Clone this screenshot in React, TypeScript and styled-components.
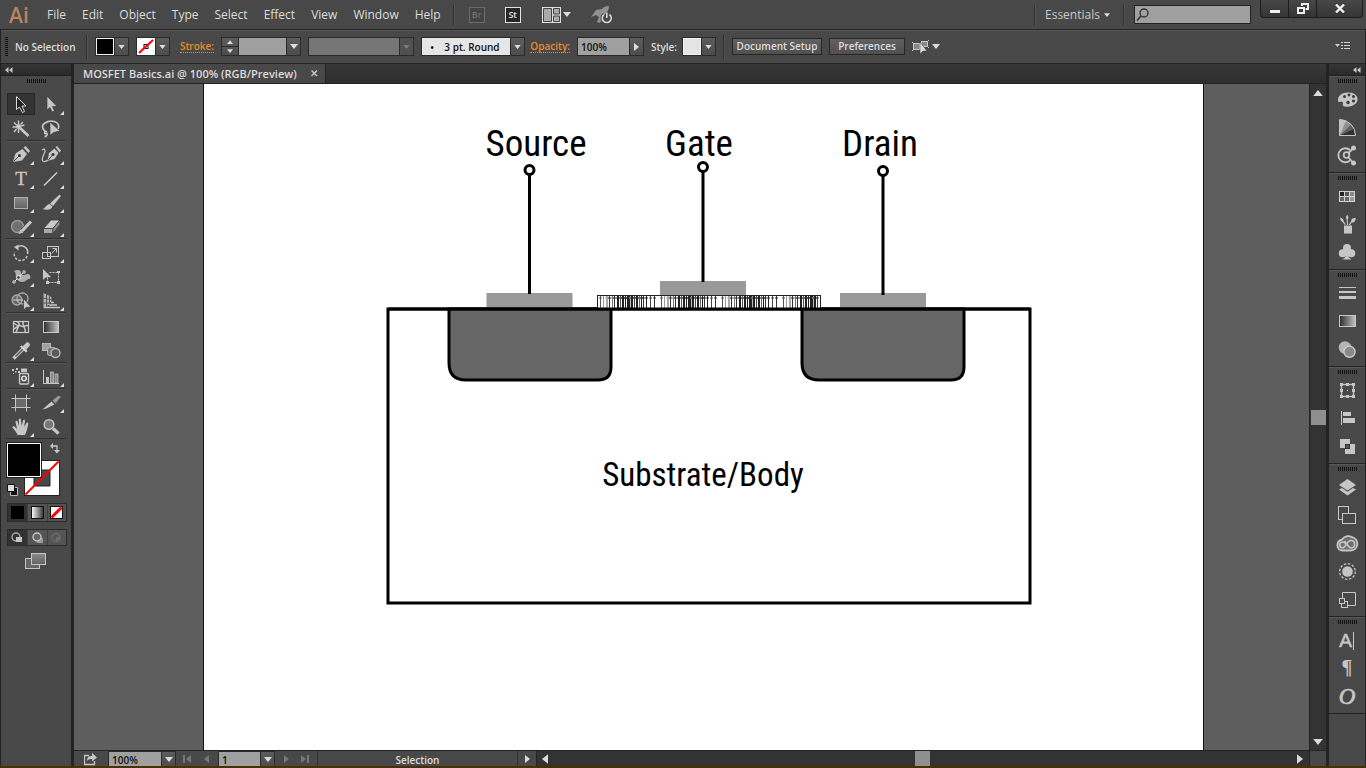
import React from "react";
import styled, { createGlobalStyle, css } from "styled-components";

const c = {
  panel: "#484848",
  line: "#232323",
  light: "#585858",
  icon: "#c6c6c6",
  text: "#dcdcdc",
  orange: "#e68a2e",
  field: "#a0a0a0",
  track: "#333333",
};

const GlobalStyle = createGlobalStyle`
  * { box-sizing: border-box; }
  body { margin: 0; background: ${c.panel}; overflow: hidden; }
  button, input, select { font: inherit; color: inherit; margin: 0; padding: 0; border: 0; border-radius: 0; background: none; }
  svg { display: block; flex: none; }
`;

const Window = styled.div`
  display: flex;
  flex-direction: column;
  height: 100vh;
  font-family: "Open Sans", "Noto Sans", sans-serif;
  font-size: 11px;
  color: ${c.text};
  background: ${c.panel};
  border-bottom: 2px solid #4a2e08;
`;

/* ---------- menu bar ---------- */

const MenuBar = styled.header`
  display: flex;
  flex: none;
  height: 29px;
  padding: 0 3px 0 9px;
  align-items: center;
`;

const Logo = styled.div`
  width: 30px;
  color: #b98261;
  font: 600 21px/26px "Open Sans", sans-serif;
`;

const Menus = styled.nav`
  display: flex;
  margin-right: 4px;
  font: 12px/27px "Open Sans", sans-serif;
`;

const MenuItem = styled.button`
  padding: 0 8px;
  height: 27px;
  white-space: nowrap;
`;

const VRule = styled.span<{ $h?: number }>`
  flex: none;
  width: 2px;
  height: ${(p) => p.$h ?? 20}px;
  border-left: 1px solid #303030;
  border-right: 1px solid #555;
`;

const AppIcons = styled.div`
  display: flex;
  align-items: center;
  gap: 20px;
  margin-left: 14px;
`;

const AppBadge = styled.button<{ $dim?: boolean }>`
  width: 16px;
  height: 16px;
  border: 1px solid ${(p) => (p.$dim ? "#6c6c6c" : "#e2e2e2")};
  background: ${(p) => (p.$dim ? "#434343" : "#262626")};
  color: ${(p) => (p.$dim ? "#707070" : "#e2e2e2")};
  font: 600 9px/13px "Open Sans", sans-serif;
`;

const IconButton = styled.button`
  display: flex;
  align-items: center;
  gap: 2px;
`;

const MenuRight = styled.div`
  display: flex;
  align-items: center;
  align-self: stretch;
  gap: 9px;
  margin-left: auto;
`;

const Workspace = styled.button`
  display: flex;
  align-items: center;
  justify-content: space-between;
  width: 69px;
  height: 24px;
  padding-right: 4px;
  color: #c8c8c8;
  font: 12px/22px "Open Sans", sans-serif;
`;

const Search = styled.label`
  display: flex;
  align-items: center;
  width: 117px;
  height: 19px;
  background: ${c.field};
  border: 1px solid ${c.line};

  input { flex: 1; min-width: 0; color: #111; outline: 0; }
`;

const WindowButtons = styled.div`
  display: flex;
  align-self: flex-start;
  height: 18px;
  border: 1px solid #1c1c1c;
  border-top: 0;
  border-radius: 0 0 4px 4px;
  background: linear-gradient(#474747, #353535);
`;

const WindowButton = styled.button<{ $w: number }>`
  display: grid;
  place-items: center;
  width: ${(p) => p.$w}px;
  & + & { border-left: 1px solid #1c1c1c; }
`;

/* ---------- control bar ---------- */

const ControlBar = styled.div`
  display: flex;
  flex: none;
  align-items: center;
  gap: 7px;
  height: 35px;
  padding: 0 15px 0 4px;
  border: 1px solid ${c.line};
  box-shadow: inset 0 1px ${c.light};
  font-size: 10px;
  font-weight: 600;
`;

const Grip = styled.span<{ $vertical?: boolean }>`
  flex: none;
  ${(p) =>
    p.$vertical
      ? css`
          width: 3px;
          height: 19px;
          background: repeating-linear-gradient(#111 0 1px, transparent 1px 2px);
        `
      : css`
          width: 19px;
          height: 4px;
          background: repeating-linear-gradient(90deg, #111 0 1px, transparent 1px 2px);
        `}
`;

const Status = styled.span`
  width: 64px;
  white-space: nowrap;
`;

const LinkLabel = styled.a<{ $w: number }>`
  display: flex;
  justify-content: flex-end;
  width: ${(p) => p.$w}px;
  color: ${c.orange};
  text-decoration: none;
  line-height: 12px;
  white-space: nowrap;

  span { border-bottom: 1px dotted ${c.orange}; }
`;

const Combo = styled.span<{ $w: number; $tone?: string; $dim?: boolean }>`
  display: flex;
  flex: none;
  width: ${(p) => p.$w}px;
  height: 19px;
  border: 1px solid #2a2a2a;
  background: ${(p) => (p.$dim ? "#505050" : "linear-gradient(#5c5c5c, #4c4c4c)")};

  select, input {
    flex: 1;
    min-width: 0;
    appearance: none;
    outline: 0;
    opacity: 1;
    padding: 0 3px;
    background: ${(p) => p.$tone ?? c.field};
    color: #111;
  }
`;

const ArrowCell = styled.span`
  display: grid;
  flex: none;
  place-items: center;
  width: 14px;
  border-left: 1px solid #2a2a2a;
`;

const Stepper = styled.span`
  display: grid;
  width: 17px;
  border-right: 1px solid #2a2a2a;

  button { display: grid; place-items: center; }
  button + button { border-top: 1px solid #2a2a2a; }
`;

const SwatchButton = styled.button`
  display: flex;
  flex: none;
  width: 34px;
  height: 19px;
  border: 1px solid #2a2a2a;
  background: linear-gradient(#5c5c5c, #4c4c4c);
  align-items: stretch;
`;

const Chip = styled.span<{ $fill: string }>`
  flex: 1;
  border: 1px solid #f2f2f2;
  background: ${(p) => p.$fill};
`;

const StyleLabel = styled.span`
  width: 24px;
  white-space: nowrap;
`;

const PushButton = styled.button<{ $w: number }>`
  flex: none;
  width: ${(p) => p.$w}px;
  height: 17px;
  border: 1px solid #262626;
  background: linear-gradient(#616161, #4f4f4f);
  line-height: 15px;
  white-space: nowrap;
`;

const PanelMenu = styled.button`
  margin-left: auto;
`;

/* ---------- work area ---------- */

const Work = styled.main`
  display: flex;
  flex: 1;
  min-height: 0;
`;

const PanelHeader = styled.div<{ $right?: boolean }>`
  display: flex;
  flex: none;
  align-items: center;
  justify-content: ${(p) => (p.$right ? "flex-end" : "flex-start")};
  height: 12px;
  padding: 0 4px;
  background: linear-gradient(#353535, #2a2a2a);
  border-bottom: 1px solid #1f1f1f;
`;

const Tools = styled.aside`
  display: flex;
  flex: none;
  flex-direction: column;
  width: 74px;
  border: solid ${c.line};
  border-width: 0 3px 0 1px;
`;

const GripRow = styled.div<{ $h: number }>`
  display: flex;
  flex: none;
  justify-content: center;
  align-items: flex-start;
  height: ${(p) => p.$h}px;
  padding-top: 3px;
`;

const ToolGroup = styled.div`
  display: grid;
  grid-template-columns: 30px 30px;
  grid-auto-rows: 24px;
  margin-left: 5px;
  width: 60px;

  & + & {
    border-top: 1px solid #303030;
    box-shadow: inset 0 1px #555;
    padding-top: 1px;
  }
`;

const ToolButton = styled.button<{ $on?: boolean }>`
  display: grid;
  place-items: center;
  margin: 1px;
  ${(p) => p.$on && "background: #333; box-shadow: inset 0 0 0 1px #262626;"}
`;

const Paint = styled.div`
  height: 65px;
  margin-left: 5px;
  width: 60px;
  border-top: 1px solid #303030;
`;

const ModeRow = styled.div<{ $h: number }>`
  display: grid;
  grid-template-columns: repeat(3, 1fr);
  width: 60px;
  height: ${(p) => p.$h}px;
  margin: 0 0 7px 6px;
  border: 1px solid #2a2a2a;
  background: #545454;
`;

const ModeButton = styled.button<{ $on?: boolean }>`
  display: grid;
  place-items: center;
  background: ${(p) => (p.$on ? "#323232" : "none")};
  & + & { border-left: 1px solid #404040; }
`;

const ScreenMode = styled.button`
  align-self: center;
`;

const Center = styled.section`
  display: flex;
  flex: 1;
  min-width: 0;
  flex-direction: column;
  border-right: 2px solid ${c.line};
`;

const Tabs = styled.div`
  display: flex;
  flex: none;
  height: 20px;
  background: linear-gradient(#383838, #2d2d2d);
  border-bottom: 1px solid ${c.line};
`;

const Tab = styled.div`
  display: flex;
  align-items: center;
  gap: 14px;
  width: 252px;
  padding-left: 9px;
  background: ${c.panel};
  border-right: 1px solid ${c.line};
  font-weight: 600;
  font-size: 11px;
  white-space: nowrap;
`;

const CanvasRow = styled.div`
  display: flex;
  flex: 1;
  min-height: 0;
`;

const Pasteboard = styled.div`
  flex: 1;
  min-width: 0;
  overflow: hidden;
  padding-left: 129px;
  background: #5e5e5e;
`;

const Artboard = styled.div`
  width: 1001px;
  height: 100%;
  background: #fff;
  border: solid #111;
  border-width: 0 1px;
`;

const VScroll = styled.div`
  display: flex;
  flex: none;
  flex-direction: column;
  align-items: center;
  justify-content: space-between;
  width: 17px;
  padding: 6px 0 5px;
  background: ${c.track};
  border-left: 1px solid ${c.line};
`;

const Thumb = styled.span`
  width: 15px;
  height: 15px;
  background: #8f8f8f;
`;

const Footer = styled.footer`
  display: flex;
  flex: none;
  align-items: stretch;
  height: 16px;
  border-top: 1px solid ${c.line};
  font-size: 10px;
  font-weight: 600;
`;

const FooterControls = styled.div`
  display: flex;
  align-items: center;
  width: 243px;
  padding-left: 10px;
`;

const FooterNav = styled.span`
  display: flex;
  justify-content: space-evenly;
  width: 43px;
  button { display: grid; place-items: center; width: 14px; height: 15px; }
`;

const FooterCombo = styled(Combo)`
  height: 15px;
  border-bottom: 0;

  select, input { padding-top: 2px; line-height: 12px; }
`;

const Readout = styled.div`
  display: flex;
  justify-content: center;
  width: 201px;
  border: solid #303030;
  border-width: 0 1px;
  line-height: 18px;
`;

const FooterArrow = styled.button`
  display: grid;
  place-items: center;
  width: 18px;
`;

const HScroll = styled.div`
  display: flex;
  flex: 1;
  align-items: center;
  justify-content: space-between;
  padding: 0 6px 0 5px;
  background: ${c.track};
  border: solid ${c.line};
  border-width: 0 1px;
`;

const Corner = styled.span`
  width: 16px;
`;

const Dock = styled.aside`
  display: flex;
  flex: none;
  flex-direction: column;
  width: 38px;
  border: solid ${c.line};
  border-width: 0 1px;
`;

const DockGroup = styled.div`
  display: flex;
  flex-direction: column;
  align-items: center;
  padding-bottom: 2px;
  border-bottom: 1px solid ${c.line};
  box-shadow: inset 0 1px ${c.light};
`;

const DockButton = styled.button`
  display: block;
  width: 28px;
  height: 28px;
`;

/* ---------- small glyphs ---------- */

const arrowPath = { down: "0,0 8,0 4,5", up: "0,5 8,5 4,0", right: "0,0 5,4 0,8", left: "5,0 5,8 0,4" };

function Arrow({ dir = "down", fill = "#dcdcdc", size = 8 }: { dir?: keyof typeof arrowPath; fill?: string; size?: number }) {
  const side = dir === "left" || dir === "right";
  const short = Math.round(size * 0.625);
  return (
    <svg width={side ? short : size} height={side ? size : short} viewBox={side ? "0 0 5 8" : "0 0 8 5"}>
      <polygon points={arrowPath[dir]} fill={fill} />
    </svg>
  );
}

const DoubleArrow = () => (
  <svg width="8" height="6" viewBox="0 0 8 6" fill="#c8c8c8">
    <path d="M3.5 0V6L0 3ZM7.5 0V6L4 3Z" />
  </svg>
);

const I = c.icon;

/* ---------- tool icons, drawn in a 28 x 24 box ---------- */

type Tool = { name: string; art: React.ReactNode; fly?: boolean; on?: boolean };

const toolGroups: Tool[][] = [
  [
    { name: "Selection", on: true, art: <path d="M9.5 3.5V16.5L12.5 14L15.5 19.5L17.5 18.5L15 13H19Z" fill="#222" stroke="#d8d8d8" /> },
    { name: "Direct Selection", fly: true, art: <path d="M10 3V17L13 14.5L15 19L17.5 18L15.5 13.5H20Z" fill={I} stroke="#333" strokeWidth=".6" /> },
    {
      name: "Magic Wand",
      art: (
        <g stroke={I} fill="none">
          <path d="M13 11L21.5 19" strokeWidth="2.8" />
          <path d="M11.5 3.5V7M11.5 12V16M5.5 10H9M14 9L17.5 8M7 5.5L9.5 8M16 5L13.5 7.5M7 15L9.5 12" strokeWidth="1.4" />
          <circle cx="11.5" cy="9.5" r="2.5" fill={I} stroke="none" />
        </g>
      ),
    },
    {
      name: "Lasso",
      art: (
        <g>
          <path d="M10 15C5 13 4 8 8 6C12 3 20 3.5 21.5 8C22 10 21 12 20 12.5M10 15C6.5 13.5 7 18 10 16.5C11 18 9 19.5 7.5 19.5" fill="none" stroke={I} strokeWidth="1.6" />
          <path d="M13 5V18.5L16.5 15.5L23 14Z" fill={I} stroke="#333" strokeWidth=".6" />
        </g>
      ),
    },
  ],
  [
    {
      name: "Pen",
      fly: true,
      art: (
        <g fill={I}>
          <path d="M16.5 4.5L18.5 3L23 8L21.5 10Z" />
          <path d="M6 19L8.5 10.5L15.5 6L20 11L15 17.5Z" />
          <path d="M6.5 18.5L12 13" stroke="#444" />
          <circle cx="12.5" cy="12.5" r="1.5" fill="#333" />
        </g>
      ),
    },
    {
      name: "Curvature",
      fly: true,
      art: (
        <g fill={I}>
          <path d="M18.5 4L20 3L24 7.5L22.5 9.5Z" />
          <path d="M10.5 18L12 10L17.5 5.5L21.5 10L17.5 16Z" />
          <circle cx="16" cy="11.5" r="1.5" fill="#333" />
          <path d="M10.5 18L15.5 12" stroke="#444" />
          <path d="M5 7C8 5 9 7 7 11C5 15 4 19 8 18.5C10 18 10 18 11 17" fill="none" stroke={I} strokeWidth="1.2" />
        </g>
      ),
    },
    { name: "Type", fly: true, art: <text x="14" y="18" textAnchor="middle" fontFamily="Liberation Serif, serif" fontSize="19" fill={I} stroke={I} strokeWidth=".4">T</text> },
    { name: "Line Segment", fly: true, art: <path d="M7 18.5L20 5.5" stroke="#d0d0d0" strokeWidth="1.5" /> },
    { name: "Rectangle", fly: true, art: <rect x="7.5" y="6.5" width="13" height="11" fill="url(#shade)" stroke="#b0b0b0" /> },
    {
      name: "Paintbrush",
      fly: true,
      art: (
        <g fill={I}>
          <path d="M22.5 3.5L24 5L16 15L13 12.5Z" />
          <path d="M12.5 13L15.5 15.5C14 19 10 19.5 5.5 18C8.5 17.5 9 13.5 12.5 13Z" />
        </g>
      ),
    },
    {
      name: "Shaper",
      fly: true,
      art: (
        <g>
          <circle cx="10.5" cy="11.5" r="6" fill="#707070" stroke="#999" strokeWidth="1.4" />
          <path d="M23.5 7L15 16" stroke="#444" strokeWidth="4.5" />
          <path d="M24 6.5L15 16" stroke={I} strokeWidth="3.2" />
          <path d="M13.5 14.5L16.5 17.5L11.5 19Z" fill={I} />
        </g>
      ),
    },
    {
      name: "Eraser",
      fly: true,
      art: (
        <g stroke="#3a3a3a" strokeWidth=".8">
          <path d="M14 5H23L16 13.5H6.5Z" fill="#c8c8c8" />
          <path d="M6.5 13.5H16V18.5H6.5Z" fill="#a8a8a8" />
          <path d="M23 5V9.5L16 18.5V13.5Z" fill="#8c8c8c" />
        </g>
      ),
    },
  ],
  [
    {
      name: "Rotate",
      fly: true,
      art: (
        <g fill="none" stroke={I} strokeWidth="1.5">
          <path d="M10 6.5A6.5 6.5 0 0 1 20.5 13" />
          <path d="M20 15A6.5 6.5 0 0 1 7.5 11" strokeDasharray="2.5 1.5" />
          <path d="M11.5 3.5V9.5L7 6Z" fill={I} stroke="none" />
        </g>
      ),
    },
    {
      name: "Scale",
      fly: true,
      art: (
        <g fill="none" stroke={I}>
          <rect x="10.5" y="5.5" width="11" height="10" />
          <rect x="5.5" y="11.5" width="8" height="6" />
          <path d="M14.5 12.5L19 8M15.5 7.5H19.5V11.5" />
        </g>
      ),
    },
    {
      name: "Width",
      fly: true,
      art: (
        <g>
          <path d="M7 6C11 4 14 5 14 8C15 12 18 9 21 9C23 9 24 12 23 14C21 13 19 17 15 17C11 17 11 14 10 14C7 13 11 10 7 6Z" fill="#b0b0b0" />
          <path d="M7 17L11.5 12.5L17 7" stroke="#eee" fill="none" />
          <g fill="#333" stroke="#eee">
            <circle cx="7" cy="17" r="1.2" />
            <circle cx="11.5" cy="12.5" r="1.8" />
            <circle cx="17" cy="7" r="1.2" />
          </g>
        </g>
      ),
    },
    {
      name: "Free Transform",
      art: (
        <g>
          <path d="M12.5 7.5H21.5V17.5H10.5V12" fill="none" stroke={I} strokeDasharray="2 1" />
          <path d="M20 6H23V8H20ZM20 16H23V19H20ZM9 16H12V19H9Z" fill={I} />
          <path d="M6 4V15L8.5 12.5L14 12Z" fill={I} />
        </g>
      ),
    },
    {
      name: "Shape Builder",
      fly: true,
      art: (
        <g fill="none" stroke="#aaa" strokeWidth="1.3">
          <circle cx="10" cy="11" r="5" fill="#666" />
          <circle cx="15.5" cy="9.5" r="5.5" />
          <path d="M6.5 11H16" stroke="#eee" strokeDasharray="1 1" />
          <path d="M16.5 9.5V21L19 18.5L24 18Z" fill={I} stroke="#333" strokeWidth=".6" />
        </g>
      ),
    },
    {
      name: "Perspective Grid",
      fly: true,
      art: (
        <g>
          <path d="M6.5 4L14.5 8V13H12.5V16H10.5V19H6.5Z" fill="#b4b4b4" />
          <path d="M9.5 5V19M12.5 6V16M6 9L15 11M6 14H13" stroke="#5a5a5a" fill="none" />
          <path d="M14 13.5H17M12 16H20M7 18.5H23" stroke={I} strokeWidth="1.6" />
        </g>
      ),
    },
  ],
  [
    {
      name: "Mesh",
      art: (
        <g fill="none" stroke={I} strokeWidth="1.2">
          <rect x="6.5" y="6.5" width="15" height="11" />
          <path d="M6.5 14C10 13 12 9 14 11C17 13 18 9 21.5 11M10 6.5C15 9 10 13 9 17.5M17 6.5C13 9 20 13 18 17.5M6.5 8L11 11" strokeWidth="1.5" />
        </g>
      ),
    },
    { name: "Gradient", art: <rect x="6.5" y="6.5" width="15" height="11" fill="url(#fade)" stroke={I} /> },
    {
      name: "Eyedropper",
      fly: true,
      art: (
        <g>
          <path d="M16 10L8.5 17.5L6.5 19.5" stroke={I} strokeWidth="3.5" />
          <path d="M16 10L8.5 17.5" stroke="#555" strokeWidth="1.5" />
          <path d="M13 7.5L14.5 6.5L20.5 12L19 13.5Z" fill="#ddd" />
          <path d="M15.5 7.5L19.5 3.5C21 2.5 24 5 22.5 7L19 11Z" fill={I} />
        </g>
      ),
    },
    {
      name: "Blend",
      art: (
        <g stroke="#b8b8b8">
          <rect x="5.5" y="4.5" width="8" height="7" fill="#a0a0a0" />
          <rect x="10.5" y="8.5" width="8" height="8" rx="2" fill="#777" />
          <circle cx="18.5" cy="14" r="4.5" fill="#5a5a5a" strokeWidth="1.4" />
        </g>
      ),
    },
  ],
  [
    {
      name: "Symbol Sprayer",
      fly: true,
      art: (
        <g fill={I}>
          <path d="M5 4h2v2H5zM8 6h1.5v1.5H8zM9 3h2v2H9zM11 6h2v2h-2zM6 8h1v1H6z" />
          <rect x="14" y="3.5" width="6" height="3.5" />
          <rect x="12.5" y="8.5" width="9" height="10.5" rx="1" fill="none" stroke={I} strokeWidth="1.4" />
          <circle cx="17" cy="13.5" r="2.2" fill="none" stroke="#ddd" strokeWidth="1.6" />
        </g>
      ),
    },
    {
      name: "Column Graph",
      fly: true,
      art: (
        <g fill={I}>
          <path d="M6 5H7V18H22V19H6Z" />
          <rect x="9" y="12" width="3" height="6" />
          <rect x="13.5" y="7" width="3" height="11" fill="#8d8d8d" stroke={I} strokeWidth=".7" />
          <rect x="18" y="9" width="3" height="9" fill="#8d8d8d" stroke={I} strokeWidth=".7" />
        </g>
      ),
    },
  ],
  [
    {
      name: "Artboard",
      art: (
        <g fill="none" stroke={I}>
          <rect x="8.5" y="7.5" width="11" height="9" fill="#6a6a6a" />
          <path d="M4.5 7.5H23.5M4.5 16.5H23.5M8.5 3.5V20.5M19.5 3.5V20.5" />
        </g>
      ),
    },
    {
      name: "Slice",
      fly: true,
      art: (
        <g fill={I}>
          <path d="M5.5 18.5L14.5 10.5L17.5 13.5C13 15.5 10 18 5.5 18.5Z" />
          <path d="M15.5 9.5L21 5L24 5.5L18.5 12.5Z" fill="#999" />
        </g>
      ),
    },
    {
      name: "Hand",
      fly: true,
      art: (
        <path
          d="M10.5 20C10 17.5 6.5 14 5.5 12.5C5 11.5 7 10.5 8 12L10 14L8.5 7C8.3 5.5 10 5.2 10.5 6.5L12 11L11.8 4.5C12 3.2 13.7 3.2 14 4.5L14.5 11L16 5.5C16.5 4.2 18.2 4.6 18 6L17.2 12L19.5 8C20.2 7 21.7 7.7 21.3 9C20.5 12 20 16 18 20Z"
          fill={I}
        />
      ),
    },
    {
      name: "Zoom",
      art: (
        <g fill="none" stroke={I}>
          <circle cx="12" cy="9.5" r="4.8" fill="#777" strokeWidth="1.5" />
          <path d="M16 13.5L21.5 18.5" strokeWidth="3.2" />
        </g>
      ),
    },
  ],
];

/* ---------- dock icons, drawn in a 28 x 28 box ---------- */

type Panel = [string, React.ReactNode];

const glyph = (ch: string, x: number, family: string, extra: object = {}) => (
  <text x={x} y="21" textAnchor="middle" fontFamily={family} fontSize="19" fill={I} {...extra}>
    {ch}
  </text>
);

const dockGroups: Panel[][] = [
  [
    [
      "Color",
      <g key="g">
        <path d="M5 15C4.5 9 10 6 16 6.5C22 7 25 10 24.5 14C24 18.5 18 21.5 12 20.5C8 20 11 17 9.5 16C8 15 5.5 17 5 15Z" fill={I} />
        <g fill="#3c3c3c">
          <circle cx="11.5" cy="10.5" r="1.5" />
          <circle cx="16" cy="9" r="1.4" />
          <circle cx="20.5" cy="10.5" r="1.5" />
          <circle cx="20.5" cy="15" r="1.6" />
          <circle cx="15" cy="16.5" r="1.7" />
        </g>
      </g>,
    ],
    [
      "Color Guide",
      <g key="g">
        <path d="M6.5 5.5V21.5H22.5A16 16 0 0 0 6.5 5.5Z" fill="#c0c0c0" />
        <path d="M6.5 21.5L13 7L18 10.5Z" fill="#909090" />
        <path d="M6.5 21.5L18 10.5L21 14.5Z" fill="#606060" />
        <path d="M6.5 21.5L21 14.5L22.5 21.5Z" fill="#303030" />
        <path d="M6.5 5.5V21.5H22.5A16 16 0 0 0 6.5 5.5Z" fill="none" stroke={I} />
      </g>,
    ],
    [
      "Color Themes",
      <g key="g" fill="none" stroke={I}>
        <path d="M17 8A7 7 0 1 0 17 18.5" strokeWidth="1.8" />
        <circle cx="13.5" cy="13" r="2.8" strokeWidth="1.8" />
        <path d="M15.5 11L20 6.5M15.5 15.5L20 20.5" strokeWidth="1.8" />
        <circle cx="20.5" cy="6" r="2.5" fill={I} stroke="none" />
        <circle cx="20.5" cy="21" r="2.5" fill={I} stroke="none" />
      </g>,
    ],
  ],
  [
    [
      "Swatches",
      <g key="g">
        <rect x="6" y="8" width="16" height="11" fill="#d2d2d2" />
        <path d="M7 9h4v4H7z" fill="#222" />
        <path d="M12 9h4v4h-4z" fill="#555" />
        <path d="M17 9h4v4h-4z" fill="#888" />
        <path d="M7 14h4v4H7zM12 14h4v4h-4z" fill="#666" />
        <path d="M17 14h4v4h-4z" fill="#999" />
      </g>,
    ],
    [
      "Brushes",
      <g key="g" fill={I}>
        <path d="M11 14.5H19V22.5H11Z" />
        <path d="M14 14L13.5 8C12 6 14 5 14 3.5C15.5 5 16 7 14.7 8.5L15 14ZM12 14L9 10.5C7 9.5 7.5 8 7 6.5C9.5 7 11 8.5 10.5 10L13 14ZM15.5 14L18 10.5C18.5 7 21 6.5 23 7.5C22 10 21.5 12 18.8 11.5L17 14Z" />
      </g>,
    ],
    [
      "Symbols",
      <g key="g" fill={I}>
        <circle cx="14" cy="9" r="4" />
        <circle cx="9.8" cy="14.3" r="4" />
        <circle cx="18.2" cy="14.3" r="4" />
        <path d="M13 12H15L15.5 18L18.5 20.5H9.5L12.5 18Z" />
      </g>,
    ],
  ],
  [
    ["Stroke", <path key="g" d="M6 7h17v1H6zM6 11h17v2H6zM6 16h17v3H6z" fill={I} />],
    ["Gradient", <rect key="g" x="6.5" y="7.5" width="16" height="11" fill="url(#fade)" stroke={I} />],
    [
      "Transparency",
      <g key="g">
        <circle cx="12" cy="11.5" r="6.3" fill="#b4b4b4" />
        <circle cx="16.5" cy="15.8" r="5.6" fill="#8a8a8a" stroke="#d0d0d0" strokeWidth="1.3" />
      </g>,
    ],
  ],
  [
    [
      "Transform",
      <g key="g">
        <rect x="8.5" y="7.5" width="12" height="12" fill="none" stroke={I} strokeWidth="1.4" />
        <path d="M7 6h3v3H7zM13 6h3v3h-3zM19 6h3v3h-3zM7 12h3v3H7zM19 12h3v3h-3zM7 18h3v3H7zM13 18h3v3h-3zM19 18h3v3h-3z" fill={I} />
        <path d="M14 13h1v1h-1z" fill="#eee" />
      </g>,
    ],
    ["Align", <path key="g" d="M8 6h1v14H8zM10 7h8v4h-8zM10 13h12v5H10z" fill={I} />],
    [
      "Pathfinder",
      <g key="g">
        <path d="M7 6h10v9H7zM12 11h10v10H12z" fill={I} />
        <rect x="12.5" y="11.5" width="4" height="4" fill="#555" stroke="#333" />
      </g>,
    ],
  ],
  [
    [
      "Layers",
      <g key="g" fill={I}>
        <path d="M14.5 5L23 11L14.5 16.5L6 11Z" />
        <path d="M6 15.5L9 14L14.5 17.8L20 14L23 15.5L14.5 21.5Z" />
      </g>,
    ],
    [
      "Artboards",
      <g key="g" fill={c.panel} stroke={I}>
        <rect x="5.5" y="4.5" width="10" height="13" />
        <rect x="9.5" y="11.5" width="13" height="10" />
      </g>,
    ],
    [
      "Libraries",
      <g key="g" fill="none" stroke={I}>
        <path d="M10 20.5C3 21 2.5 11 9 9.5C12 5.5 16.5 5.5 19 7.2C27 9 25.5 20.5 18 20.5Z" fill="#6e6e6e" strokeWidth="1.8" />
        <path d="M15 15.5C13.5 14 12 12 9.8 12C5.8 12 5.8 17.8 9.8 17.8C13 17.8 13.5 10.5 18 10.5C22.8 10.5 22.8 17.8 18 17.8C15.5 17.8 14 14.5 11.5 11" strokeWidth="1.6" />
      </g>,
    ],
    [
      "Appearance",
      <g key="g">
        <circle cx="14.5" cy="13.5" r="5.3" fill={I} />
        <circle cx="14.5" cy="13.5" r="7.8" fill="none" stroke={I} strokeWidth="1.3" strokeDasharray="2.5 1.6" />
      </g>,
    ],
    [
      "Asset Export",
      <g key="g" fill={c.panel} stroke={I}>
        <path d="M9.5 12V6.5H22.5V19.5H14" fill="none" />
        <rect x="8.5" y="15.5" width="6" height="6" />
        <rect x="6.5" y="12.5" width="5" height="5" />
      </g>,
    ],
  ],
  [
    [
      "Character",
      <g key="g">
        {glyph("A", 12.5, "Liberation Sans, sans-serif", { stroke: I, strokeWidth: 0.6, y: 20 })}
        <path d="M20 5h1v18h-1z" fill={I} />
      </g>,
    ],
    ["Paragraph", <g key="g">{glyph("¶", 14, "Liberation Serif, serif", { fontSize: 20, fontWeight: 700, y: 19 })}</g>],
    ["OpenType", <g key="g">{glyph("O", 14, "Liberation Serif, serif", { fontStyle: "italic", fontSize: 23, stroke: I, strokeWidth: 0.7 })}</g>],
  ],
];

/* ---------- diagram ---------- */

const hatch: [number, number, string][] = [
  [3, 1, "#555"], [6, 1, "#999"], [9, 2, "#aaa"], [12, 1, "#333"], [15, 1, "#777"], [17, 1, "#333"], [20, 2, "#222"],
  [23, 1, "#555"], [25, 2, "#222"], [28, 1, "#222"], [30, 3, "#222"], [33, 1, "#bbb"], [34, 2, "#222"], [37, 1, "#444"], [39, 2, "#222"],
  [42, 1, "#666"], [44, 1, "#222"], [46, 1, "#333"], [49, 1, "#222"], [53, 1, "#444"], [57, 1, "#333"],
];

function Terminal({ x, y, end, plate }: { x: number; y: number; end: number; plate: number }) {
  return (
    <g>
      <rect x={x - 43} y={plate} width="86" height="14" fill="#999" />
      <path d={`M${x} ${y + 5}V${end}`} stroke="#000" strokeWidth="3" />
      <circle cx={x} cy={y} r="4.5" fill="#fff" stroke="#000" strokeWidth="3" />
    </g>
  );
}

const Drawing = () => (
  <svg width="999" height="666" viewBox="204 84 999 666" role="img" aria-label="MOSFET cross-section">
    <g fontFamily="'Agency FB', 'Roboto Condensed', Roboto, sans-serif" fill="#000" textAnchor="middle">
      <text x="536" y="156" fontSize="37">Source</text>
      <text x="699" y="156" fontSize="37">Gate</text>
      <text x="880" y="156" fontSize="37">Drain</text>
      <text x="703" y="486" fontSize="33">Substrate/Body</text>
    </g>
    <rect x="388" y="309" width="642" height="294" fill="none" stroke="#000" strokeWidth="3" />
    {[449, 802].map((x) => (
      <path key={x} d={`M${x} 309h162v58q0 13 -13 13h-132q-17 0 -17 -17z`} fill="#666" stroke="#000" strokeWidth="3" />
    ))}
    <Terminal x={529.5} y={170} end={294} plate={293} />
    <Terminal x={703} y={167} end={282} plate={281} />
    <Terminal x={883} y={171} end={295} plate={293} />
    <rect x="597.5" y="295.5" width="223" height="13" fill="#fff" stroke="#222" />
    {[597, 658, 719, 780].flatMap((start) =>
      hatch
        .filter(([dx]) => start + dx < 819)
        .map(([dx, w, tone]) => (
          <g key={start + dx} fill={tone}>
            <rect x={start + dx} y="296" width={w} height="12" />
            {tone !== "#999" && <rect x={start + dx - 0.5} y="297" width={w + 1} height="2" />}
          </g>
        )),
    )}
    <path d="M388 309H1030" stroke="#000" strokeWidth="3" />
  </svg>
);

/* ---------- sections ---------- */

const SharedPaints = () => (
  <svg width="0" height="0" aria-hidden="true">
    <linearGradient id="shade" x2="0" y2="1"><stop stopColor="#8a8a8a" /><stop offset="1" stopColor="#626262" /></linearGradient>
    <linearGradient id="fade"><stop stopColor="#2c2c2c" /><stop offset="1" stopColor="#c4c4c4" /></linearGradient>
    <linearGradient id="mono"><stop stopColor="#fff" /><stop offset="1" stopColor="#333" /></linearGradient>
  </svg>
);

const menus = ["File", "Edit", "Object", "Type", "Select", "Effect", "View", "Window", "Help"];

const TopMenu = () => (
  <MenuBar>
    <Logo>Ai</Logo>
    <Menus>{menus.map((m) => <MenuItem key={m}>{m}</MenuItem>)}</Menus>
    <VRule />
    <AppIcons>
      <AppBadge $dim>Br</AppBadge>
      <AppBadge>St</AppBadge>
      <IconButton aria-label="Arrange Documents">
        <svg width="20" height="16" viewBox="0 0 20 16">
          <path d="M1 0H20V16H1Z" fill="#e0e0e0" />
          <path d="M2.5 1.5H10.500V14.5H2.5ZM12.5 1.5H18.5V7H12.5ZM12.5 9H18.5V14.5H12.5Z" fill="#aaa" stroke="#444" />
        </svg>
        <Arrow />
      </IconButton>
      <IconButton aria-label="GPU Performance">
        <svg width="22" height="18" viewBox="0 0 22 18">
          <path d="M0 11L5 4L11 3C12 1 15 0 18 0C18 3 17 6 13 9L9 17L6 16L8 11L5 9Z" fill="#929292" />
          <path d="M13 8.5A4.5 4.5 0 1 0 18.5 8.5" fill="none" stroke="#444" strokeWidth="3.5" />
          <path d="M13 8.5A4.5 4.5 0 1 0 18.5 8.5M15.8 6.5V12" fill="none" stroke="#d8d8d8" strokeWidth="1.6" />
        </svg>
      </IconButton>
    </AppIcons>
    <MenuRight>
      <VRule />
      <Workspace>Essentials <Arrow size={6} /></Workspace>
      <VRule />
      <Search>
        <svg width="15" height="15" viewBox="0 0 15 15" fill="none" stroke="#333">
          <circle cx="9" cy="6" r="4" strokeWidth="1.4" />
          <path d="M6 9L2 13.5" strokeWidth="1.6" />
        </svg>
        <input aria-label="Search" />
      </Search>
      <WindowButtons>
        <WindowButton $w={27} aria-label="Minimize"><svg width="10" height="12"><path d="M0 7h10v3H0z" fill="#eee" /></svg></WindowButton>
        <WindowButton $w={28} aria-label="Restore">
          <svg width="12" height="11" viewBox="0 0 12 11" fill="none" stroke="#eee" strokeWidth="2">
            <path d="M5 3V1H11V6H8.5M1 5H7V10H1Z" />
          </svg>
        </WindowButton>
        <WindowButton $w={46} aria-label="Close">
          <svg width="10" height="9" viewBox="0 0 10 9"><path d="M1 0.5L9 8.5M9 0.5L1 8.5" stroke="#eee" strokeWidth="2.4" /></svg>
        </WindowButton>
      </WindowButtons>
    </MenuRight>
  </MenuBar>
);

const Controls = () => (
  <ControlBar>
    <Grip $vertical />
    <Status>No Selection</Status>
    <VRule $h={25} />
    <SwatchButton aria-label="Fill"><Chip $fill="#000" /><ArrowCell><Arrow size={7} /></ArrowCell></SwatchButton>
    <SwatchButton aria-label="Stroke color">
      <svg width="18" height="17" viewBox="0 0 18 17">
        <path d="M0 0H18V17H0Z" fill="#fff" />
        <rect x="7" y="6.5" width="4" height="4" fill="none" stroke="#111" />
        <path d="M2 15L16 2" stroke="#f00" strokeWidth="2" />
      </svg>
      <ArrowCell><Arrow size={7} /></ArrowCell>
    </SwatchButton>
    <LinkLabel $w={37} href="#stroke"><span>Stroke:</span></LinkLabel>
    <Combo $w={80}>
      <Stepper>
        <button aria-label="Increase stroke"><Arrow dir="up" size={6} /></button>
        <button aria-label="Decrease stroke"><Arrow size={6} /></button>
      </Stepper>
      <input aria-label="Stroke weight" />
      <ArrowCell><Arrow size={8} /></ArrowCell>
    </Combo>
    <Combo $w={106} $tone="#757575" $dim>
      <select aria-label="Variable width profile" disabled />
      <ArrowCell><Arrow size={7} fill="#7c7c7c" /></ArrowCell>
    </Combo>
    <Combo $w={104} $tone="#e6e6e6">
      <select aria-label="Brush definition"><option>&nbsp;&nbsp;•&nbsp;&nbsp;&nbsp;&nbsp;3 pt. Round</option></select>
      <ArrowCell><Arrow size={7} /></ArrowCell>
    </Combo>
    <LinkLabel $w={38} href="#opacity"><span>Opacity:</span></LinkLabel>
    <Combo $w={67}>
      <input aria-label="Opacity" defaultValue="100%" />
      <ArrowCell><Arrow dir="right" size={8} /></ArrowCell>
    </Combo>
    <StyleLabel>Style:</StyleLabel>
    <SwatchButton aria-label="Graphic style"><Chip $fill="#e4e4e4" /><ArrowCell><Arrow size={7} /></ArrowCell></SwatchButton>
    <VRule $h={25} />
    <PushButton $w={90}>Document Setup</PushButton>
    <PushButton $w={76}>Preferences</PushButton>
    <IconButton aria-label="Select similar objects">
      <svg width="18" height="16" viewBox="0 0 18 16">
        <rect x="1.5" y="4.5" width="6" height="6" fill="#888" stroke={I} />
        <rect x="9.5" y="2.5" width="6" height="5" fill="#888" stroke={I} />
        <path d="M8 3V15L11 12L15 12Z" fill="#ddd" stroke="#333" strokeWidth=".5" />
        <path d="M0 3h1v1H0zM0 11h1v1H0zM16 1h1v1h-1zM16 8h1v1h-1z" fill={I} />
      </svg>
      <Arrow />
    </IconButton>
    <PanelMenu aria-label="Panel menu">
      <svg width="15" height="9" viewBox="0 0 15 9" fill="#d0d0d0">
        <path d="M0 2H5L2.5 5ZM6 0h2v1H6zM9 0h6v1H9zM6 3h2v1H6zM9 3h6v1H9zM6 6h2v1H6zM9 6h6v1H9z" />
      </svg>
    </PanelMenu>
  </ControlBar>
);

const Fly = () => <path d="M27 18V22H23Z" fill="#ddd" />;

const Toolbox = () => (
  <Tools>
    <PanelHeader><DoubleArrow /></PanelHeader>
    <GripRow $h={16}><Grip /></GripRow>
    {toolGroups.map((group, i) => (
      <ToolGroup key={i}>
        {group.map((t) => (
          <ToolButton key={t.name} $on={t.on} aria-label={t.name}>
            <svg width="28" height="24" viewBox="0 0 28 24">{t.art}{t.fly && <Fly />}</svg>
          </ToolButton>
        ))}
      </ToolGroup>
    ))}
    <Paint>
      <svg width="60" height="62" viewBox="6 439 60 62">
        <path d="M24 460H60V496H24Z" fill="#222" />
        <path d="M25 461H59V495H25Z" fill="#fff" />
        <path d="M34 470H50V486H34Z" fill="#484848" stroke="#222" />
        <path d="M25.5 494.5L58.5 461.5" stroke="#f00" strokeWidth="2" />
        <path d="M6 442H42V478H6Z" fill="#222" />
        <path d="M7.5 443.5H40.5V476.5H7.5Z" fill="#000" stroke="#fff" />
        <path d="M52 446H57V451" fill="none" stroke={I} strokeWidth="1.3" />
        <path d="M53 443V449L50 446ZM54 450H60L57 453.5Z" fill={I} />
        <path d="M10.5 487.5H17.5V495.5H10.5Z" fill="#111" stroke="#bbb" />
        <path d="M7.5 484.5H14.5V491.5H7.5Z" fill="#ddd" stroke="#111" />
      </svg>
    </Paint>
    <ModeRow $h={19}>
      <ModeButton $on aria-label="Color"><svg width="13" height="13"><path d="M0 0h13v13H0z" /></svg></ModeButton>
      <ModeButton aria-label="Gradient fill"><svg width="13" height="13"><rect x=".5" y=".5" width="12" height="12" fill="url(#mono)" stroke="#111" /></svg></ModeButton>
      <ModeButton aria-label="None">
        <svg width="13" height="13"><rect x=".5" y=".5" width="12" height="12" fill="#fff" stroke="#111" /><path d="M1.5 11.5L11.5 1.5" stroke="#f00" strokeWidth="3" /></svg>
      </ModeButton>
    </ModeRow>
    <ModeRow $h={17}>
      <ModeButton $on aria-label="Draw Normal"><svg width="13" height="11"><circle cx="5" cy="5" r="4" fill="none" stroke="#aaa" strokeWidth="1.4" /><path d="M5 5h6v5H5z" fill={I} /></svg></ModeButton>
      <ModeButton aria-label="Draw Behind"><svg width="13" height="11"><path d="M6 6h6v5H6z" fill="#999" /><circle cx="6" cy="5" r="4" fill="#666" stroke={I} strokeWidth="1.4" /></svg></ModeButton>
      <ModeButton aria-label="Draw Inside"><svg width="13" height="11"><circle cx="6" cy="5.5" r="4" fill="none" stroke="#6c6c6c" strokeWidth="1.4" /><path d="M6 5h4v4H6z" fill="#6c6c6c" /></svg></ModeButton>
    </ModeRow>
    <ScreenMode aria-label="Change Screen Mode">
      <svg width="22" height="17" viewBox="0 0 22 17" stroke={I}>
        <rect x=".5" y="5.5" width="14" height="10" fill="#666" />
        <rect x="6.5" y=".5" width="14" height="11" fill="url(#shade)" />
      </svg>
    </ScreenMode>
  </Tools>
);

const StatusBar = () => (
  <Footer>
    <FooterControls>
      <IconButton aria-label="Share">
        <svg width="24" height="14" viewBox="0 0 24 14">
          <path d="M5 3.5H.5V12.5H10.5V9" fill="none" stroke={I} strokeWidth="1.3" />
          <path d="M3 9C3 5 5 4 8 4V1L13 5.5L8 9.5V7C5.5 7 4 7.5 3 9Z" fill={I} />
        </svg>
      </IconButton>
      <FooterCombo $w={68}>
        <input aria-label="Zoom level" defaultValue="100%" />
        <ArrowCell><Arrow size={8} /></ArrowCell>
      </FooterCombo>
      <FooterNav>
        <button aria-label="First artboard"><svg width="9" height="8" fill="#777"><path d="M0 0h2v8H0zM8 0v8L3 4z" /></svg></button>
        <button aria-label="Previous artboard"><Arrow dir="left" fill="#777" /></button>
      </FooterNav>
      <FooterCombo $w={57}>
        <select aria-label="Artboard"><option>1</option></select>
        <ArrowCell><Arrow size={8} /></ArrowCell>
      </FooterCombo>
      <FooterNav>
        <button aria-label="Next artboard"><Arrow dir="right" fill="#777" /></button>
        <button aria-label="Last artboard"><svg width="9" height="8" fill="#777"><path d="M0 0v8L5 4zM6 0h2v8H6z" /></svg></button>
      </FooterNav>
    </FooterControls>
    <Readout>Selection</Readout>
    <FooterArrow aria-label="Status options"><Arrow dir="right" /></FooterArrow>
    <HScroll>
      <Arrow dir="left" size={10} />
      <Thumb />
      <Arrow dir="right" size={10} />
    </HScroll>
    <Corner />
  </Footer>
);

export default function App() {
  return (
    <Window>
      <GlobalStyle />
      <SharedPaints />
      <TopMenu />
      <Controls />
      <Work>
        <Toolbox />
        <Center>
          <Tabs>
            <Tab>
              MOSFET Basics.ai @ 100% (RGB/Preview)
              <button aria-label="Close tab">
                <svg width="7" height="7"><path d="M.5 .5L6 6M6 .5L.5 6" stroke="#ccc" strokeWidth="1.4" /></svg>
              </button>
            </Tab>
          </Tabs>
          <CanvasRow>
            <Pasteboard><Artboard><Drawing /></Artboard></Pasteboard>
            <VScroll>
              <Arrow dir="up" size={10} />
              <Thumb />
              <Arrow size={10} />
            </VScroll>
          </CanvasRow>
          <StatusBar />
        </Center>
        <Dock>
          <PanelHeader $right><DoubleArrow /></PanelHeader>
          {dockGroups.map((group, i) => (
            <DockGroup key={i}>
              <GripRow $h={10}><Grip /></GripRow>
              {group.map(([name, art]) => (
                <DockButton key={name} aria-label={name}>
                  <svg width="28" height="28" viewBox="0 0 28 28">{art}</svg>
                </DockButton>
              ))}
            </DockGroup>
          ))}
        </Dock>
      </Work>
    </Window>
  );
}
